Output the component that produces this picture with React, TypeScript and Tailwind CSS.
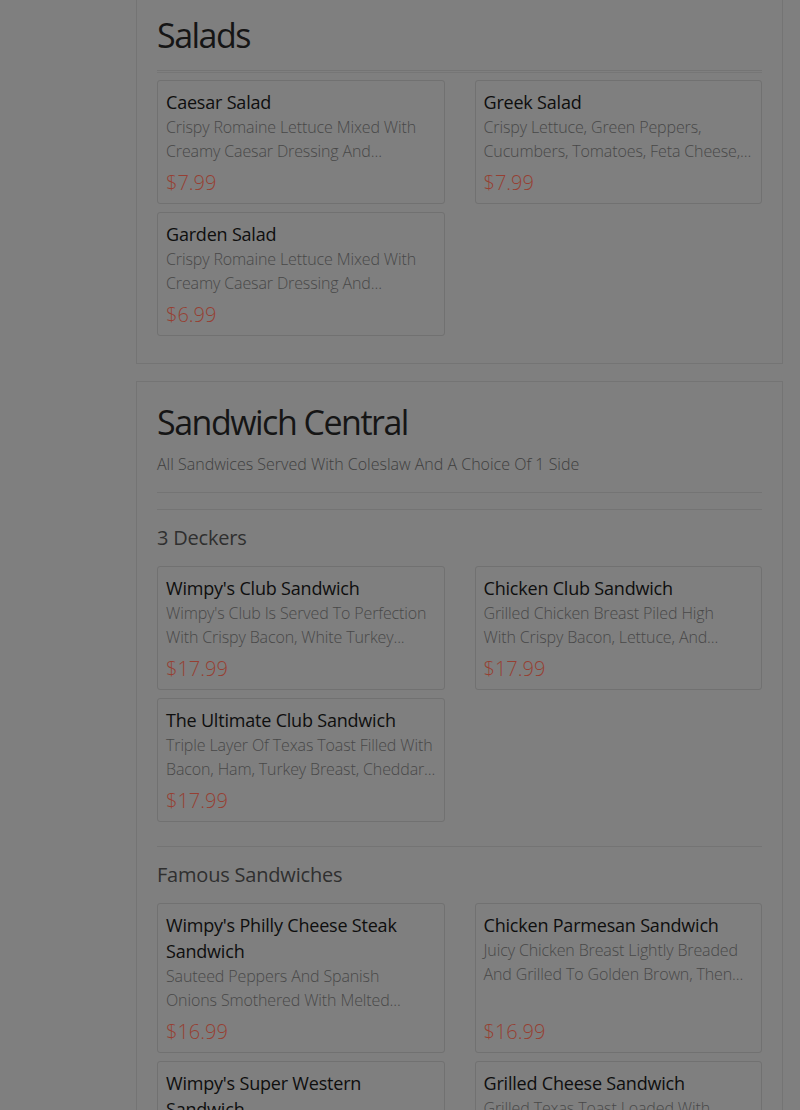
import React from "react";

type Item = { name: string; desc: string; price: string };

const SALADS: Item[] = [
  { name: "Caesar Salad", desc: "Crispy Romaine Lettuce Mixed With\nCreamy Caesar Dressing And...", price: "$7.99" },
  { name: "Greek Salad", desc: "Crispy Lettuce, Green Peppers,\nCucumbers, Tomatoes, Feta Cheese,...", price: "$7.99" },
  { name: "Garden Salad", desc: "Crispy Romaine Lettuce Mixed With\nCreamy Caesar Dressing And...", price: "$6.99" },
];

const DECKERS: Item[] = [
  { name: "Wimpy's Club Sandwich", desc: "Wimpy's Club Is Served To Perfection\nWith Crispy Bacon, White Turkey...", price: "$17.99" },
  { name: "Chicken Club Sandwich", desc: "Grilled Chicken Breast Piled High\nWith Crispy Bacon, Lettuce, And...", price: "$17.99" },
  { name: "The Ultimate Club Sandwich", desc: "Triple Layer Of Texas Toast Filled With\nBacon, Ham, Turkey Breast, Cheddar...", price: "$17.99" },
];

const FAMOUS: Item[] = [
  { name: "Wimpy's Philly Cheese Steak Sandwich", desc: "Sauteed Peppers And Spanish\nOnions Smothered With Melted...", price: "$16.99" },
  { name: "Chicken Parmesan Sandwich", desc: "Juicy Chicken Breast Lightly Breaded\nAnd Grilled To Golden Brown, Then...", price: "$16.99" },
  { name: "Wimpy's Super Western Sandwich", desc: "Grilled Ham, Peppers And Onions\nTopped With Melted Cheese...", price: "$16.99" },
  { name: "Grilled Cheese Sandwich", desc: "Grilled Texas Toast Loaded With\nMelted American Cheese...", price: "$9.99" },
];

function Card({ item }: { item: Item }) {
  return (
    <div className="flex flex-col border border-[#717171] rounded-[3px] px-2 pt-2 pb-[7px]">
      <h4 className="text-[18px] leading-[26px] tracking-[-0.2px] text-[#0e0e0e]">{item.name}</h4>
      <p className="whitespace-pre-line text-[16px] leading-[24px] font-light tracking-[-0.12px] text-[#484848]">
        {item.desc}
      </p>
      <p className="mt-auto pt-[7px] text-[20px] leading-[26px] font-light text-[#963f33]">{item.price}</p>
    </div>
  );
}

function Grid({ items }: { items: Item[] }) {
  return (
    <div className="grid grid-cols-2 gap-x-[30px] gap-y-2">
      {items.map((it) => (
        <Card key={it.name} item={it} />
      ))}
    </div>
  );
}

function SubHeading({ children }: { children: React.ReactNode }) {
  return (
    <h3 className="mt-[13px] mb-[13px] text-[20px] leading-[30px] tracking-[-0.2px] text-[#2f2f2f]">
      {children}
    </h3>
  );
}

function Title({ children }: { children: React.ReactNode }) {
  return <h1 className="text-[34px] leading-[40px] tracking-[-1.5px] text-[#151515]">{children}</h1>;
}

export default function App() {
  return (
    <div
      className="h-[1110px] bg-[#7f7f7f] overflow-hidden"
      style={{ fontFamily: '"Open Sans", "Noto Sans", sans-serif' }}
    >
      <div className="ml-[136px] w-[647px] flex flex-col gap-[17px] -mt-[6px]">
        {/* Salads */}
        <section className="border border-[#747474] px-5 pt-5 pb-[27px]">
          <Title>Salads</Title>
          <div className="mt-[15px] border-t border-[#747474]" />
          <div className="mt-px border-t border-[#767676] mb-[7px]" />
          <Grid items={SALADS} />
        </section>

        {/* Sandwich Central */}
        <section className="border border-[#747474] px-5 pt-5 pb-[27px]">
          <Title>Sandwich Central</Title>
          <p className="mt-2.5 text-[16px] leading-[24px] font-light text-[#3e3e3e]">
            All Sandwices Served With Coleslaw And A Choice Of 1 Side
          </p>
          <div className="mt-[16px] border-t border-[#747474]" />

          <div className="mt-[16px] border-t border-[#747474]" />
          <SubHeading>3 Deckers</SubHeading>
          <Grid items={DECKERS} />

          <div className="mt-[24px] border-t border-[#747474]" />
          <SubHeading>Famous Sandwiches</SubHeading>
          <Grid items={FAMOUS} />
        </section>
      </div>
    </div>
  );
}
